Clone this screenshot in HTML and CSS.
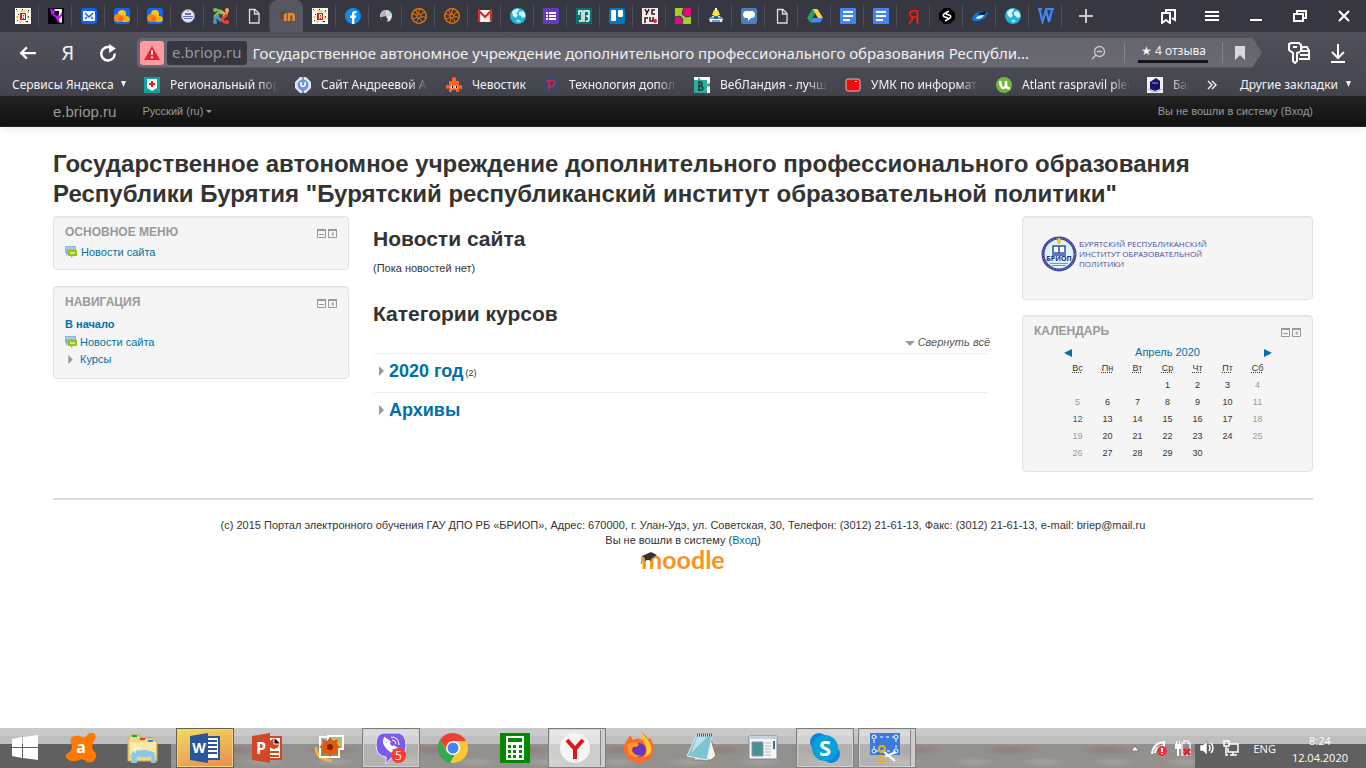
FILE: index.html
```
<!DOCTYPE html>
<html lang="ru">
  <head>
    <meta charset="UTF-8" />
    <meta name="viewport" content="width=device-width, initial-scale=1.0" />
    <title>e.briop.ru</title>
    <link rel="stylesheet" href="styles.css">
  </head>
  <body>
    <!-- shared icons -->
    <svg class="sprite" aria-hidden="true">
      <symbol id="i-ya-pic" viewBox="0 0 16 16"><path fill="#fff" d="M0 0h16v16H0z"/><path fill="#f5c518" d="M1 3l2-1 1 2zM5 1l3 2 3-2-1 3H6zM15 3l-3 0 1 3zM1 8l3 0-2 3zM15 9l-3-1 1 4zM4 13l3 0-2 3zM9 13l4 0-1 2z"/><path fill="#222" d="M1 1h1v1H1zM7 1h1v1H7zM13 2h1v1h-1zM3 6h1v1H3zM13 8h1v1h-1zM2 12h1v1H2zM11 13h2v1h-2z"/><path fill="#d01818" d="M5 5h6v7H5z"/><path fill="none" stroke="#fff" d="M9.500 11V6.500h-2V9h2M8 9l-1 2"/></symbol>
      <symbol id="i-cloud" viewBox="0 0 16 16"><rect width="16" height="16" rx="3" fill="#1067f5"/><circle cx="8" cy="6" r="4" fill="#ffc61a"/><circle cx="4" cy="10" r="4" fill="#ff8a00"/><path fill="#ff6b13" d="M5 14a4 4 0 0 1 2-6q3 0 4 3l1 3z"/><path fill="#ffb300" d="M9 14q-1-5 3-6 4 0 4 4l-2 2z"/></symbol>
      <symbol id="i-doc" viewBox="0 0 16 16"><path fill="none" stroke="#dcdce0" stroke-width="1.300" d="M3.500 1.500h5.500l4 4v9.500H3.500zM8.500 2v4h4.500"/></symbol>
      <symbol id="i-wheel" viewBox="0 0 16 16"><g fill="none" stroke="#f57c00"><circle cx="8" cy="8" r="7.300" stroke-width="1.300"/><circle cx="8" cy="8" r="2"/><path d="M8 6q-1-3 1-5M10 7q1-3 4-3M10 9q3-1 5 1M8 10q3 2 3 4M7 10q0 3-2 5M6 9q-2 2-5 2M6 7Q3 7 1 5M7 6Q5 4 5 2"/></g></symbol>
      <symbol id="i-globe" viewBox="0 0 16 16"><circle cx="8" cy="8" r="8" fill="#21b3dc"/><path fill="#d9f6fc" d="M2 4q3-4 7-3l-1 3-2 1 2 2-2 3-3-2zM9 4l4-1q3 3 2 6l-3 1-1-2-2-1z"/><path fill="#93e3f5" d="M6 12q3-1 5 1l-3 2z"/></symbol>
      <symbol id="i-gdocs" viewBox="0 0 16 16"><rect width="16" height="16" rx="1" fill="#4285f4"/><path fill="#fff" d="M3 3h10v2H3zM3 7h10v2H3zM3 11h7v2H3z"/></symbol>
      <symbol id="i-forum" viewBox="0 0 12 12"><path fill="#8ab4e8" d="M0 0h11v7H4L1 10V7H0z"/><path fill="#a9ccf4" d="M1 1h9v2H1z"/><path fill="#98c020" d="M3 4h9v6H8l-2 2v-2H3z"/><path fill="#d3ee6a" d="M5 6h5v2H5z"/></symbol>
      <symbol id="i-min" viewBox="0 0 9 9"><path fill="none" stroke="#999" d="M.5.5h8v8h-8z"/><path fill="#999" d="M0 0h9v2H0zM2 5h5v1H2z"/></symbol>
      <symbol id="i-dock" viewBox="0 0 9 9"><path fill="none" stroke="#999" d="M.5.5h8v8h-8z"/><path fill="#999" d="M0 0h9v2H0zM3 5l3-2v1L5 5l1 1v1z"/></symbol>
      <symbol id="i-tri" viewBox="0 0 6 10"><path fill="#999" d="M0 0l5 5-5 5z"/></symbol>
      <symbol id="i-down" viewBox="0 0 7 7"><path fill="#f2f2f4" d="M1 0h5L3.500 6z"/></symbol>
    </svg>

    <header class="browser">
      <div class="tabbar">
        <div class="tabs">
          <button class="tab" aria-label="Вкладка"><svg><use href="#i-ya-pic"/></svg></button>
          <button class="tab" aria-label="Вкладка"><svg viewBox="0 0 16 16"><path d="M0 0h16v16H0z"/><path fill="#b620f0" d="M2 0l5 3-1 3 3 2 5-6v13l-4-1-3-5-3 2z"/><path fill="#eee" d="M6 1h8v3l-3 4V3H7zM11 11l3-3v6l-2 1z"/><path d="M1 4l7 6 1 6H0z"/></svg></button>
          <button class="tab" aria-label="Почта"><svg viewBox="0 0 16 16"><rect width="16" height="16" rx="3" fill="#0b63f6"/><rect x="2" y="3" width="12" height="10" rx="1" fill="#fff"/><path fill="none" stroke="#0b63f6" stroke-width="1.500" d="M4 5l4 4 4-4M4 11l2-2M12 11l-2-2"/></svg></button>
          <button class="tab" aria-label="Облако"><svg><use href="#i-cloud"/></svg></button>
          <button class="tab" aria-label="Облако"><svg><use href="#i-cloud"/></svg></button>
          <button class="tab" aria-label="Вкладка"><svg viewBox="0 0 16 16"><circle cx="8" cy="8" r="6.500" fill="#e6e8f4" stroke="#8a8fc4"/><path fill="#6a70b8" d="M5 5h6v2H5zM3 8h10v1H3zM4 10h8v1H4z"/><path fill="#d6c94a" d="M7 2h2v2H7z"/></svg></button>
          <button class="tab" aria-label="Joomla"><svg viewBox="0 0 16 16"><g fill="none" stroke-width="2.600"><path stroke="#7ac143" d="M2 11V8l6-6"/><path stroke="#7ac143" d="M2 2q3-1 5 2l2 2"/><path stroke="#f9a541" d="M14 2q1 3-2 5l-2 2M8 3l6 5"/><path stroke="#f44321" d="M14 14q-3 1-5-2L7 10M14 6L8 13"/><path stroke="#5091cd" d="M2 14q-1-3 2-5l2-2M8 13L3 8"/></g><circle cx="2" cy="2" r="2" fill="#7ac143"/><circle cx="14" cy="2" r="2" fill="#f9a541"/><circle cx="14" cy="14" r="2" fill="#f44321"/><circle cx="2" cy="14" r="2" fill="#5091cd"/></svg></button>
          <button class="tab" aria-label="Документ"><svg><use href="#i-doc"/></svg></button>
          <button class="tab active" aria-label="e.briop.ru"><svg viewBox="0 0 16 16"><path fill="none" stroke="#f28a2c" stroke-width="2.600" d="M6.300 13V5M10 13V5M10 8q0-2 2.300-2t2.300 2v5"/><path fill="#5b4a42" d="M0 5l5-2 3 1-4 3-2 4H1z"/></svg></button>
          <button class="tab" aria-label="Вкладка"><svg><use href="#i-ya-pic"/></svg></button>
          <button class="tab" aria-label="Facebook"><svg viewBox="0 0 16 16"><circle cx="8" cy="8" r="8" fill="#1089f2"/><path fill="#fff" d="M7 16v-6H5V7.500h2V6q0-3 3-3h1.500v2.200H10Q9.400 5.200 9.400 6v1.500h2l-.4 2.500H9.400v6z"/></svg></button>
          <button class="tab" aria-label="Вкладка"><svg viewBox="0 0 16 16"><circle cx="8" cy="8" r="6" fill="#e9e3ee"/><path fill="#c8a8d8" d="M8 8V2A6 6 0 0 0 2 8z"/><path fill="#3b3c45" d="M8 8l-6 1q1 5 6 6l2-3z"/><path fill="#b9dbc9" d="M8 8l2-6q4 2 4 6z"/></svg></button>
          <button class="tab" aria-label="Вкладка"><svg><use href="#i-wheel"/></svg></button>
          <button class="tab" aria-label="Вкладка"><svg><use href="#i-wheel"/></svg></button>
          <button class="tab" aria-label="Gmail"><svg viewBox="0 0 16 16"><path fill="#f2f2f2" d="M1 2h14v12H1z"/><path fill="none" stroke="#d93025" stroke-width="2.200" d="M2 14V3l6 6 6-6v11"/></svg></button>
          <button class="tab" aria-label="Вкладка"><svg><use href="#i-globe"/></svg></button>
          <button class="tab" aria-label="Формы"><svg viewBox="0 0 16 16"><rect width="16" height="16" rx="1" fill="#673ab7"/><path fill="#fff" d="M3 4h2v2H3zM6 4h7v2H6zM3 7h2v2H3zM6 7h7v2H6zM3 10h2v2H3zM6 10h7v2H6z"/></svg></button>
          <button class="tab" aria-label="Вкладка"><svg viewBox="0 0 16 16"><path fill="#0a7070" d="M0 0h16v16H0z"/><path fill="none" stroke="#fff" stroke-width="1.500" d="M3 13h3V3H3v4M8 14V3h5v5h-3q3 0 3 3t-3 2"/></svg></button>
          <button class="tab" aria-label="Trello"><svg viewBox="0 0 16 16"><rect width="16" height="16" rx="2" fill="#0079bf"/><rect x="2" y="2" width="5" height="11" rx="1" fill="#fff"/><rect x="9" y="2" width="5" height="7" rx="1" fill="#fff"/></svg></button>
          <button class="tab" aria-label="vc.ru"><svg viewBox="0 0 16 16"><path fill="#fbe9ea" d="M0 0h16v16H0z"/><path fill="none" stroke="#222" stroke-width="1.500" d="M3 1l2 4M7 1L4 7M13 2h-3v4h3M3 15v-5h3M8 9v4h3V9"/><circle cx="13" cy="13" r="2" fill="#e8192c"/></svg></button>
          <button class="tab" aria-label="Вкладка"><svg viewBox="0 0 16 16"><path fill="#a4cf2a" d="M0 0h16v16H0z"/><path fill="#e5097f" d="M8 0h8v8l-5 1-4-3zM0 9l5-1 3 3-1 5H0z"/><path fill="none" stroke="#333640" d="M9 0L7 6l4 3 5-1M0 9l5-1 3 3-1 5"/></svg></button>
          <button class="tab" aria-label="Вкладка"><svg viewBox="0 0 16 16"><path fill="#ffe13b" d="M6 2h4l2 5H4z"/><path fill="#fff" d="M7 0h2v3H7z"/><path fill="#e8edf2" d="M1 11q7-8 14 0l-1 3H2z"/><path fill="none" stroke="#3c8fb7" stroke-width="1.500" d="M2 10h12M4 13h8"/><path fill="#276b91" d="M6 8h4v3H6z"/></svg></button>
          <button class="tab" aria-label="Чат"><svg viewBox="0 0 16 16"><rect width="16" height="16" rx="2" fill="#4d7dba"/><path fill="#fff" d="M4 3h8q2 1 2 3.500T12 10h-2l-3 3v-3H4Q2 9 2 6.500T4 3z"/></svg></button>
          <button class="tab" aria-label="Документ"><svg><use href="#i-doc"/></svg></button>
          <button class="tab" aria-label="Диск"><svg viewBox="0 0 16 16"><path fill="#21a464" d="M5.500 1L8 5.500 3 14 0 10z"/><path fill="#ffcf48" d="M5.500 1h5L16 10h-5z"/><path fill="#4688f4" d="M5.500 10H16l-3 4.500H3z"/></svg></button>
          <button class="tab" aria-label="Документы"><svg><use href="#i-gdocs"/></svg></button>
          <button class="tab" aria-label="Документы"><svg><use href="#i-gdocs"/></svg></button>
          <button class="tab tab-ya">Я</button>
          <button class="tab" aria-label="Вкладка"><svg viewBox="0 0 16 16"><path d="M5 0h6l5 5v6l-5 5H5l-5-5V5z"/><path fill="none" stroke="#fff" stroke-width="1.600" d="M10 3L5 6q-2 2 1 3l3 1M6 13l5-3q2-2-1-3L7 6"/></svg></button>
          <button class="tab" aria-label="Вкладка"><svg viewBox="0 0 16 16"><path fill="#087af0" d="M0 11Q2 4 10 3q8 0 5 4-3 6-11 6-4 0-4-2z"/><path fill="#0a1f4a" d="M7 5q5-3 8-1l-3 3H6z"/><path fill="#e9f5ff" d="M4 10q2-3 8-3-2 4-7 4z"/></svg></button>
          <button class="tab" aria-label="Вкладка"><svg><use href="#i-globe"/></svg></button>
          <button class="tab" aria-label="Вкладка"><svg viewBox="0 0 16 16"><path fill="none" stroke="#4285f4" stroke-width="2.200" d="M0 1h4M1.500 1l3 13L8 2l3 12 3-12M9 1h7"/></svg></button>
        </div>
        <button class="new-tab" aria-label="Новая вкладка"><svg viewBox="0 0 14 14"><path stroke="#c9c9cf" stroke-width="2" d="M7 0v14M0 7h14"/></svg></button>
        <div class="window-buttons">
          <button aria-label="Закладки"><svg viewBox="0 0 16 16"><path fill="none" stroke="#fff" stroke-width="2" d="M6 4V2h9v10l-3-2M2 5h8v10l-4-3-4 3z"/></svg></button>
          <button aria-label="Меню"><svg viewBox="0 0 16 16"><path fill="#fff" d="M1 3h14v2H1zM1 7h14v2H1zM1 11h14v2H1z"/></svg></button>
          <button aria-label="Свернуть"><svg viewBox="0 0 16 16"><path stroke="#fff" stroke-width="2" d="M2 12h12"/></svg></button>
          <button aria-label="Окно"><svg viewBox="0 0 16 16"><path fill="none" stroke="#fff" stroke-width="2" d="M2 6h9v7H2zM5 6V3h9v7h-3"/></svg></button>
          <button aria-label="Закрыть"><svg viewBox="0 0 16 16"><path stroke="#fff" stroke-width="2" d="M3 3l10 10M13 3L3 13"/></svg></button>
        </div>
      </div>

      <div class="toolbar">
        <button class="nav" aria-label="Назад"><svg viewBox="0 0 16 16"><path fill="none" stroke="#fff" stroke-width="2" d="M15 8H1M7 3L2 8l5 5"/></svg></button>
        <button class="nav yandex">Я</button>
        <button class="nav" aria-label="Обновить"><svg viewBox="0 0 16 16"><path fill="none" stroke="#fff" stroke-width="2.200" d="M14 8.500A6 6 0 1 1 10 3"/><path fill="#fff" d="M9 0l6 4-6 4z"/></svg></button>
        <div class="address">
          <button class="warning" aria-label="Небезопасно"><svg viewBox="0 0 18 16"><path fill="#df2531" d="M9 0l9 16H0z"/><path stroke="#fff" stroke-width="2" d="M9 5v5M9 12v2"/></svg></button>
          <button class="domain">e.briop.ru</button>
          <input class="page-title" type="text" aria-label="Адрес" value="Государственное автономное учреждение дополнительного профессионального образования Республи...">
          <button class="lens" aria-label="Масштаб"><svg viewBox="0 0 16 16"><circle cx="9.500" cy="6.500" r="5" fill="none" stroke="#c9c9ce" stroke-width="1.300"/><path stroke="#c9c9ce" stroke-width="1.400" d="M7 6.500h5M6 10l-4 4"/></svg></button>
          <button class="reviews">★ 4 отзыва</button>
          <button class="mark" aria-label="В закладки"><svg viewBox="0 0 10 14"><path fill="#d8d8dc" d="M0 0h10v14L5 9l-5 5z"/></svg></button>
        </div>
        <button class="tool" aria-label="Пароли"><svg viewBox="0 0 22 22"><g fill="none" stroke="#fff" stroke-width="2"><path d="M12 10L9 11v8l-2 2-2-2v-8L1 8V2l2-1h8l2 2v6"/><path d="M12 9h9v8H11M13 9l1-4h5l2 4M12 13h9"/></g><path fill="#fff" d="M5 4h4v2H5z"/></svg></button>
        <button class="tool download" aria-label="Загрузки"><svg viewBox="0 0 16 20"><path fill="none" stroke="#fff" stroke-width="2" d="M8 1v14M2 9l6 6 6-6M1 19h14"/></svg></button>
      </div>

      <nav class="bookmarks">
        <button class="services">Сервисы Яндекса <svg><use href="#i-down"/></svg></button>
        <a class="bookmark" href="#"><svg viewBox="0 0 16 16"><path fill="#12a29a" d="M0 0h16v16H0z"/><path fill="#f6f6f6" d="M3 2h10v9l-5 3-5-3z"/><path fill="#e2202c" d="M7 4h2v2h2v2H9v2H7V8H5V6h2z"/></svg><span class="fade">Региональный пор</span></a>
        <a class="bookmark" href="#"><svg viewBox="0 0 16 16"><path fill="#dfe5f2" d="M5 0h6l5 5v6l-5 5H5l-5-5V5z"/><circle cx="8" cy="8" r="5.500" fill="#6f93dc"/><path fill="none" stroke="#fff" stroke-width="1.500" d="M6 5v3q2 3 4 0V5"/><path stroke="#6f93dc" stroke-width="2" d="M8 0v3M8 13v3"/></svg><span class="fade">Сайт Андреевой А</span></a>
        <a class="bookmark short" href="#"><svg viewBox="0 0 16 16"><path fill="#ff6418" d="M6 1q2-2 4 0v3h3v5q1-2 3 0v3q-2 1-3-1v4h-3v-2H6v2H3v-4q-2 2-3 0V8q2-1 3 1V4h3z"/><circle cx="6" cy="10" r="1.600" fill="#fff"/><circle cx="10" cy="10" r="1.600" fill="#fff"/><path d="M6 9h1v2H6zM10 9h1v2h-1z"/></svg><span>Чевостик</span></a>
        <a class="bookmark" href="#"><svg viewBox="0 0 16 16"><circle cx="8" cy="8" r="7" fill="none" stroke="#2d4f86" stroke-width="1.500"/><path fill="none" stroke="#c22f62" stroke-width="1.500" d="M6 13V4q6-2 6 2t-6 3M3 4h4"/></svg><span class="fade">Технология допол</span></a>
        <a class="bookmark" href="#"><svg viewBox="0 0 16 16"><path fill="#fff" d="M0 0h16v16H0z"/><path fill="#35a99b" d="M0 3h4V0l3 3h6v4l3-1v4l-3-1v7H0z"/><path fill="none" stroke="#173f3d" stroke-width="1.500" d="M5 5v8M4 5h3q3 2-1 4 5 1 2 4H4"/></svg><span class="fade">ВебЛандия - лучш</span></a>
        <a class="bookmark" href="#"><svg viewBox="0 0 16 16"><rect x="1" y="2" width="14" height="12" rx="2" fill="#f80808" stroke="#d6c1c4"/><path fill="#fff" d="M10 4h2v1h-2z"/></svg><span class="fade">УМК по информат</span></a>
        <a class="bookmark" href="#"><svg viewBox="0 0 16 16"><circle cx="8" cy="8" r="8" fill="#70b83c"/><path fill="none" stroke="#fff" stroke-width="2.500" d="M4 4l1 5q2 4 5 0V4M10 8q1 4 4 3"/></svg><span class="fade">Atlant raspravil plec</span></a>
        <a class="bookmark last" href="#"><svg viewBox="0 0 16 16"><path fill="#f3f3f7" d="M0 0h16v16H0z"/><path fill="#15156e" d="M3 5l6-4 4 3v8l-5 2-5-2z"/><path fill="none" stroke="#9a9cc8" d="M5 6h6M1 12q7 5 14 0"/></svg><span class="fade">Бар</span></a>
        <button class="more" aria-label="Ещё"><svg viewBox="0 0 10 10"><path fill="none" stroke="#f2f2f4" stroke-width="1.400" d="M1 1l4 4-4 4M5 1l4 4-4 4"/></svg></button>
        <button class="other">Другие закладки <svg><use href="#i-down"/></svg></button>
      </nav>
    </header>

    <div class="navbar">
      <a class="brand" href="#">e.briop.ru</a>
      <button class="lang">Русский (ru)<span class="caret"></span></button>
      <span class="login">Вы не вошли в систему (<a href="#">Вход</a>)</span>
    </div>

    <div class="page">
      <h1>Государственное автономное учреждение дополнительного профессионального образования Республики Бурятия "Бурятский республиканский институт образовательной политики"</h1>

      <div class="columns">
        <aside>
          <section class="block">
            <div class="block-head">
              <h2>Основное меню</h2>
              <button aria-label="Скрыть блок"><svg><use href="#i-min"/></svg></button>
              <button aria-label="Переместить блок"><svg><use href="#i-dock"/></svg></button>
            </div>
            <ul>
              <li><svg><use href="#i-forum"/></svg><a href="#">Новости сайта</a></li>
            </ul>
          </section>
          <section class="block navigation">
            <div class="block-head">
              <h2>Навигация</h2>
              <button aria-label="Скрыть блок"><svg><use href="#i-min"/></svg></button>
              <button aria-label="Переместить блок"><svg><use href="#i-dock"/></svg></button>
            </div>
            <ul>
              <li><a href="#"><b>В начало</b></a></li>
              <li><svg><use href="#i-forum"/></svg><a href="#">Новости сайта</a></li>
              <li><svg class="arrow"><use href="#i-tri"/></svg><a href="#">Курсы</a></li>
            </ul>
          </section>
        </aside>

        <main>
          <h2>Новости сайта</h2>
          <p>(Пока новостей нет)</p>
          <h2>Категории курсов</h2>
          <div class="collapse"><button><span class="caret"></span>Свернуть всё</button></div>
          <div class="category"><svg><use href="#i-tri"/></svg><h3><a href="#">2020 год</a></h3><span>(2)</span></div>
          <div class="category"><svg><use href="#i-tri"/></svg><h3><a href="#">Архивы</a></h3></div>
        </main>

        <aside>
          <section class="block institute">
            <svg viewBox="0 0 36 36"><circle cx="18" cy="18" r="16" fill="#dff1fb" stroke="#3d449c" stroke-width="3"/><circle cx="18" cy="18" r="16" fill="none" stroke="#9fa8dc" stroke-dasharray="1 2"/><path fill="#f4c81e" d="M16 5l1-3h2l1 3-1 3h-2z"/><path fill="#fff" stroke="#34509d" stroke-width="1.500" d="M12 10h6v7h-6zM18 10h6v7h-6zM11 19h14"/><text x="18" y="25" text-anchor="middle" class="seal">БРИОП</text><path stroke="#8290b0" d="M9 27.500h18M11 29.500h14"/></svg>
            <p>БУРЯТСКИЙ РЕСПУБЛИКАНСКИЙ<br>ИНСТИТУТ ОБРАЗОВАТЕЛЬНОЙ<br>ПОЛИТИКИ</p>
          </section>
          <section class="block calendar">
            <div class="block-head">
              <h2>Календарь</h2>
              <button aria-label="Скрыть блок"><svg><use href="#i-min"/></svg></button>
              <button aria-label="Переместить блок"><svg><use href="#i-dock"/></svg></button>
            </div>
            <div class="month">
              <a href="#" aria-label="Март"><svg viewBox="0 0 8 8"><path fill="#0070a8" d="M8 0v8L0 4z"/></svg></a>
              <a href="#">Апрель 2020</a>
              <a href="#" aria-label="Май"><svg viewBox="0 0 8 8"><path fill="#0070a8" d="M0 0v8l8-4z"/></svg></a>
            </div>
            <table>
              <tr><th><abbr title="Воскресенье">Вс</abbr></th><th><abbr title="Понедельник">Пн</abbr></th><th><abbr title="Вторник">Вт</abbr></th><th><abbr title="Среда">Ср</abbr></th><th><abbr title="Четверг">Чт</abbr></th><th><abbr title="Пятница">Пт</abbr></th><th><abbr title="Суббота">Сб</abbr></th></tr>
              <tr><td></td><td></td><td></td><td>1</td><td>2</td><td>3</td><td>4</td></tr>
              <tr><td>5</td><td>6</td><td>7</td><td>8</td><td>9</td><td>10</td><td>11</td></tr>
              <tr><td class="today">12</td><td>13</td><td>14</td><td>15</td><td>16</td><td>17</td><td>18</td></tr>
              <tr><td>19</td><td>20</td><td>21</td><td>22</td><td>23</td><td>24</td><td>25</td></tr>
              <tr><td>26</td><td>27</td><td>28</td><td>29</td><td>30</td><td></td><td></td></tr>
            </table>
          </section>
        </aside>
      </div>

      <footer>
        <p>(c) 2015 Портал электронного обучения ГАУ ДПО РБ «БРИОП», Адрес: 670000, г. Улан-Удэ, ул. Советская, 30, Телефон: (3012) 21-61-13, Факс: (3012) 21-61-13, e-mail: briep@mail.ru</p>
        <p>Вы не вошли в систему (<a href="#">Вход</a>)</p>
        <a class="moodle" href="#">moodle<svg viewBox="0 0 18 16"><path fill="#333" d="M2 5l9-4 6 3-6 4v2q-3-2-6 0V7z"/><path fill="none" stroke="#777" d="M2 5v5l-1 3"/></svg></a>
      </footer>
    </div>

    <div class="taskbar">
      <button class="start" aria-label="Пуск"><svg viewBox="0 0 28 28"><path fill="#fff" d="M1 5l10-2v10H1zM12 3l15-2v12H12zM1 14h10v10L1 22zM12 14h15v12l-15-2z"/></svg></button>
      <button class="task" aria-label="Avast"><svg viewBox="0 0 32 32"><path fill="#ff7800" d="M7 5q6-3 10 0 4 1 5-2 4-4 8-1 2 4-1 7-3 4-1 9 5 4 2 9-2 5-8 3-4-4-8-2-7 3-12-1-3-4 1-6 4-2 4-7-3-5 0-9z"/><text x="16" y="21" text-anchor="middle" class="avast">a</text></svg></button>
      <button class="task" aria-label="Проводник"><svg viewBox="0 0 32 32"><path fill="#f0d77d" stroke="#c9a955" d="M4 3h8l2 3h11l5 3v20H1V8z"/><path fill="#0ca94c" d="M5 3h5v2H5z"/><path fill="#dd3e2b" d="M13 6h5v2h-5z"/><path fill="#2b8be0" d="M21 8h5v2h-5z"/><path fill="#fae9a4" d="M3 10h26v12H3z"/><path fill="#8fc5e6" d="M5 20q11-4 22 0l2 11h-5v-6H10v6H4z"/><path stroke="#fff" d="M4 16h9M8 12v9"/></svg></button>
      <button class="task open word" aria-label="Word"><svg viewBox="0 0 32 32"><path fill="#fff" stroke="#2b579a" stroke-width="2" d="M16 5h14v22H16z"/><path stroke="#2b579a" stroke-width="2" d="M19 9h9M19 13h9M19 17h9M19 21h9"/><path fill="#2b579a" d="M1 4l18-3v30L1 28z"/><text x="10" y="21" text-anchor="middle" class="office">W</text></svg></button>
      <button class="task" aria-label="PowerPoint"><svg viewBox="0 0 32 32"><path fill="#fff" stroke="#d24726" stroke-width="2" d="M16 5h14v22H16z"/><circle cx="23" cy="12" r="5" fill="#d24726"/><path stroke="#fff" d="M23 6v6h6"/><path stroke="#d24726" stroke-width="2" d="M18 20h10M18 24h10"/><path fill="#d24726" d="M1 4l18-3v30L1 28z"/><text x="10" y="22" text-anchor="middle" class="powerpoint">P</text></svg></button>
      <button class="task" aria-label="Фото"><svg viewBox="0 0 32 32"><path fill="none" stroke="#f2b43c" stroke-width="3" d="M3 15q0 12 16 14"/><path fill="#8fb8d4" stroke="#fff" stroke-width="2" d="M7 5h12v11H7z"/><path fill="#a8c46c" stroke="#fff" stroke-width="2" d="M15 4h15v13H15z"/><path fill="#7d9b52" stroke="#fff" stroke-width="2" d="M7 14h19v11H7z"/><path fill="#e8580c" d="M17 5l3 4 5-2-1 5 4 3-4 2 1 5-5-1-3 4-3-4-5 1 1-5-4-2 4-3-1-5 5 2z"/><circle cx="17" cy="15" r="3" fill="#7b2606"/></svg></button>
      <button class="task open" aria-label="Viber"><svg viewBox="0 0 32 32"><path fill="#7d5ce8" stroke="#f1ecff" d="M8 1h16q7 2 7 12t-7 12h-7l-6 7v-7Q1 24 1 13T8 1z"/><path fill="none" stroke="#fff" stroke-width="3" d="M10 7q-2 3 2 8t9 5l2-2-4-3-2 1-4-4 1-2z"/><path fill="none" stroke="#fff" d="M16 5q8 0 8 8M17 8q4 0 4 4"/></svg><span class="count">5</span></button>
      <button class="task" aria-label="Chrome"><svg viewBox="0 0 32 32"><circle cx="16" cy="16" r="15" fill="#fcc934"/><path fill="#ea4335" d="M3 8a15 15 0 0 1 26 1H16l-6 10z"/><path fill="#34a853" d="M3 8l7 12q3 3 8 2l-5 9A15 15 0 0 1 3 8z"/><circle cx="16" cy="16" r="7" fill="#fff"/><circle cx="16" cy="16" r="5.500" fill="#4285f4"/></svg></button>
      <button class="task" aria-label="Калькулятор"><svg viewBox="0 0 32 32"><path fill="#008a00" d="M1 1h30v30H1z"/><path fill="#fff" d="M7 4h18v24H7z"/><path fill="#008a00" d="M9 6h14v4H9zM9 13h3v3H9zM14 13h3v3h-3zM20 13h3v3h-3zM9 18h3v3H9zM14 18h3v3h-3zM20 18h3v3h-3zM9 23h3v3H9zM14 23h3v3h-3zM20 23h3v3h-3z"/></svg></button>
      <button class="task open stack bright" aria-label="Яндекс.Браузер"><svg viewBox="0 0 32 32"><circle cx="16" cy="16" r="15" fill="#f5f5f5"/><path fill="none" stroke="#e01515" stroke-width="4" d="M8 8l8 9 8-9M16 16v11"/></svg></button>
      <button class="task" aria-label="Firefox"><svg viewBox="0 0 32 32"><path fill="#ff6a2a" d="M5 7l2-4 3 5q5-3 9 0V0q3 3 6 7l2-1q5 7 3 14-3 11-14 11T1 19q-1-7 4-12z"/><path fill="#ffcb2f" d="M19 0q1 3 5 7 6 7 4 13-3 5-7 5 5-6 1-13-4-4-3-12z"/><circle cx="16" cy="18" r="7" fill="#6b35bd"/><path fill="#ff9a26" d="M4 13q6-5 12-1l-2 3q-5-1-5 3 1 6 9 5-7 5-12-1z"/></svg></button>
      <button class="task" aria-label="Блокнот"><svg viewBox="0 0 32 32"><path fill="#f5f1e4" stroke="#8d7b55" d="M25 4l6 20-5 4H8l4-4z"/><path fill="#80c4d4" stroke="#d7eef2" d="M11 4h16l-5 24-20-4z"/><path fill="#bbe2e8" d="M12 5h10L6 21z"/><path stroke="#555" stroke-dasharray="1 1" stroke-width="3" d="M12 3h15"/></svg></button>
      <button class="task" aria-label="Приложение"><svg viewBox="0 0 32 32"><path fill="#f7f7f7" stroke="#7c8a97" d="M2 4h28v23H2z"/><path fill="#c5d2de" d="M2 4h28v3H2z"/><path fill="#4b8f91" stroke="#8395a3" d="M5 10h11v14H5z"/><path stroke="#aab2b8" d="M18 11h6M18 14h6M18 17h6M18 20h6M18 23h6"/><path fill="#376caa" d="M26 9h2v8h-2z"/></svg></button>
      <button class="task open" aria-label="Skype"><svg viewBox="0 0 32 32"><circle cx="10" cy="10" r="9" fill="#0b86d8"/><circle cx="22" cy="22" r="9" fill="#0b86d8"/><circle cx="16" cy="16" r="13" fill="#079fdc"/><text x="16" y="24" text-anchor="middle" class="skype">S</text></svg></button>
      <button class="task open stack" aria-label="Ножницы"><svg viewBox="0 0 32 32"><path fill="#3d7bd8" d="M1 1h30v22H1z"/><path fill="none" stroke="#fff" stroke-dasharray="3 3" d="M5 5h22v14H5z"/><g fill="#3d7bd8" stroke="#fff"><circle cx="5" cy="5" r="2"/><circle cx="27" cy="5" r="2"/><circle cx="5" cy="19" r="2"/><circle cx="27" cy="19" r="2"/></g><path stroke="#fff" stroke-width="2" d="M14 19l12 10M15 25l12-5"/><g fill="none" stroke="#e8b322" stroke-width="2"><circle cx="13" cy="17" r="3"/><circle cx="13" cy="27" r="3"/></g></svg></button>
      <div class="tray">
        <button aria-label="Показать значки"><svg viewBox="0 0 16 16"><path fill="#fff" stroke="#777" d="M4 11h8L8 6z"/></svg></button>
        <button aria-label="Avast"><svg viewBox="0 0 16 16"><path fill="none" stroke="#fff" stroke-width="2" d="M1 14Q2 3 13 2M4 13q0-6 9-7M13 1v6"/><circle cx="11" cy="11" r="5" fill="#ef3038"/><path stroke="#fff" stroke-width="2" d="M11 8v4M11 13v1"/></svg></button>
        <button aria-label="Питание"><svg viewBox="0 0 16 16"><path fill="#fff" d="M0 4h6v5H4v7H2V9H0zM1 1h1v3H1zM4 1h1v3H4z"/><path fill="none" stroke="#eee" stroke-width="1.500" d="M7 15V3h2V1h4v2h2v12z"/><path stroke="#e32028" stroke-width="2.500" d="M9 9l6 6M15 9l-6 6"/></svg></button>
        <button aria-label="Громкость"><svg viewBox="0 0 16 16"><path fill="#fff" stroke="#555" stroke-width=".5" d="M1 5h3l4-4v14l-4-4H1z"/><path fill="none" stroke="#fff" stroke-width="1.500" d="M10 5q2 3 0 6M12 3q4 5 0 10"/></svg></button>
        <button aria-label="Сеть"><svg viewBox="0 0 16 16"><path fill="none" stroke="#fff" stroke-width="1.500" d="M6 4h9v8H5V8M7 15h7M10 12v3M1 1h5v5H1zM3 6v9h2"/></svg></button>
        <button class="keyboard">ENG</button>
        <div class="clock"><span>8:24</span><span>12.04.2020</span></div>
      </div>
    </div>
  </body>
</html>
```
FILE: styles.css
```
* {
  box-sizing: border-box;
}

body {
  margin: 0;
  min-height: 100vh;
  display: flex;
  flex-direction: column;
  background: #fff;
  color: #333;
  font: 11px/15px "Liberation Sans", Arial, sans-serif;
}

h1, h2, h3, p, ul {
  margin: 0;
  padding: 0;
}

button {
  margin: 0;
  padding: 0;
  border: 0;
  background: none;
  color: inherit;
  font: inherit;
}

a {
  color: #0070a8;
  text-decoration: none;
}

svg {
  display: block;
  flex: none;
}

.sprite {
  display: none;
}

/* browser window */
.browser {
  color: #f2f2f4;
  font-family: "Noto Sans", "Open Sans", sans-serif;
  background: linear-gradient(#565760, #43444d);
}

.tabbar {
  display: flex;
  align-items: center;
  height: 32px;
  padding-left: 6px;
  background: #363740;
}

.tabs {
  display: flex;
}

.tab {
  display: flex;
  align-items: center;
  justify-content: center;
  width: 33px;
  height: 32px;
  background: linear-gradient(#4c4d57, #4c4d57) right center / 1px 24px no-repeat;
}

.tab svg {
  width: 16px;
  height: 16px;
}

.tab.active {
  border-radius: 7px 7px 0 0;
  background: #565760;
}

.tab-ya {
  color: #f21b0c;
  font-size: 20px;
}

.new-tab {
  padding: 0 17px;
}

.new-tab svg {
  width: 14px;
  height: 14px;
}

.window-buttons {
  display: flex;
  gap: 28px;
  margin-left: auto;
  padding-right: 14px;
}

.window-buttons svg {
  width: 16px;
  height: 16px;
}

.toolbar {
  display: flex;
  align-items: center;
  height: 41px;
  padding: 0 20px 0 19px;
}

.nav {
  width: 18px;
  margin-right: 22px;
  font-size: 20px;
  line-height: 24px;
}

.nav svg {
  width: 18px;
  height: 18px;
}

.address {
  display: flex;
  flex: 1;
  align-items: center;
  height: 30px;
  margin: 0 26px 0 -2px;
  padding: 0 17px 0 3px;
  border-radius: 5px;
  background: linear-gradient(#64656e, #696a72);
  clip-path: polygon(0 0, calc(100% - 10px) 0, 100% 50%, calc(100% - 10px) 100%, 0 100%);
}

.warning {
  width: 24px;
  height: 24px;
  padding: 0 4px;
  border-radius: 3px;
  background: #ff9ba0;
}

.warning svg {
  width: 16px;
  height: 16px;
}

.domain {
  height: 24px;
  margin-left: 3px;
  padding: 0 5px;
  border-radius: 3px;
  background: #363740;
  color: #95969e;
  font-size: 15px;
}

.page-title {
  flex: 1;
  min-width: 0;
  padding: 0 6px;
  border: 0;
  background: none;
  color: #f0f0f2;
  font: 15px "Noto Sans", sans-serif;
}

.lens {
  padding-right: 18px;
}

.lens svg {
  width: 16px;
  height: 16px;
}

.reviews {
  height: 20px;
  padding: 0 16px 4px;
  border: solid #85868e;
  border-width: 0 1px;
  font-size: 12px;
  line-height: 14px;
  background: linear-gradient(#16161a, #16161a) center bottom / 70px 3px no-repeat;
}

.mark {
  padding-left: 12px;
}

.mark svg {
  width: 10px;
  height: 14px;
}

.tool svg {
  width: 22px;
  height: 22px;
}

.download {
  margin-left: 20px;
}

.download svg {
  width: 16px;
  height: 20px;
}

.bookmarks {
  display: flex;
  align-items: center;
  gap: 17px;
  height: 23px;
  padding: 0 14px 0 12px;
  font-size: 12px;
}

.services, .other {
  display: flex;
  align-items: center;
  justify-content: space-between;
  width: 115px;
  white-space: nowrap;
}

.services svg, .other svg {
  width: 7px;
  height: 7px;
}

.other {
  margin-left: auto;
  width: 112px;
}

.more svg {
  width: 10px;
  height: 10px;
}

.bookmark {
  display: flex;
  align-items: center;
  gap: 10px;
  width: 134px;
  color: inherit;
  white-space: nowrap;
}

.bookmark svg {
  width: 16px;
  height: 16px;
}

.short {
  width: 80px;
}

.last {
  width: 43px;
}

.fade {
  flex: 1;
  overflow: hidden;
  -webkit-mask: linear-gradient(to left, transparent, #000 20px);
  mask: linear-gradient(to left, transparent, #000 20px);
}

/* site */
.navbar {
  display: flex;
  align-items: center;
  height: 31px;
  padding: 0 53px;
  background: linear-gradient(#222, #111);
  border-bottom: 1px solid #252525;
  box-shadow: 0 1px 8px rgba(0, 0, 0, 0.1);
  color: #999;
}

.navbar a {
  color: #999;
}

.navbar .brand {
  font-size: 15px;
}

.lang {
  display: flex;
  align-items: center;
  gap: 3px;
  margin-left: 26px;
}

.caret {
  display: inline-block;
  border: 3px solid transparent;
  border-top-color: #999;
  border-bottom: 0;
}

.login {
  margin-left: auto;
}

.page {
  flex: 1;
  padding: 22px 53px 0;
}

h1 {
  margin-bottom: 7px;
  font-size: 24px;
  line-height: 30px;
}

.columns {
  display: grid;
  grid-template-columns: 296fr 625fr 291fr;
  column-gap: 24px;
  align-items: start;
}

.block {
  margin-bottom: 16px;
  padding: 5px 11px 7px;
  border: 1px solid #e3e3e3;
  border-radius: 4px;
  background: #f5f5f5;
  box-shadow: inset 0 1px 1px rgba(0, 0, 0, 0.05);
}

.block-head {
  display: flex;
  align-items: center;
  gap: 2px;
}

.block-head h2 {
  flex: 1;
  color: #999;
  font-size: 12px;
  line-height: 20px;
  text-transform: uppercase;
}

.block-head button {
  padding-top: 3px;
}

.block-head svg {
  width: 9px;
  height: 9px;
}

.block ul {
  list-style: none;
}

.block li {
  display: flex;
  align-items: center;
  gap: 4px;
  height: 20px;
}

.block li svg {
  width: 12px;
  height: 12px;
}

.block li .arrow {
  height: 9px;
}

.navigation {
  padding-bottom: 10px;
}

.navigation ul {
  padding-top: 3px;
}

.navigation li {
  gap: 3px;
  height: 18px;
}

.navigation li:last-child {
  height: 17px;
}

main {
  padding-right: 8px;
}

main h2 {
  padding-top: 8px;
  font-size: 21px;
  line-height: 30px;
}

main p {
  padding: 7px 0 15px;
}

.collapse {
  padding: 6px 0 3px;
  text-align: right;
  color: #555;
  font-style: italic;
}

.collapse .caret {
  margin-right: 3px;
  border-width: 5px 5px 0;
}

.category {
  display: flex;
  align-items: center;
  height: 39px;
  padding: 0 6px 5px;
  border-top: 1px solid #eee;
  border-radius: 4px;
}

.category svg {
  width: 6px;
  height: 10px;
  margin-right: 4px;
}

.category h3 {
  font-size: 18px;
  line-height: 20px;
}

.category span {
  padding: 5px 0 0 2px;
  font-size: 9px;
}

.institute {
  display: flex;
  align-items: center;
  gap: 2px;
  height: 84px;
  margin-bottom: 15px;
  padding: 0 17px 8px 18px;
  color: #4a4a9c;
  font: 8px/10px "Open Sans", sans-serif;
}

.institute svg {
  width: 36px;
  height: 36px;
}

.seal {
  fill: #232d80;
  font: bold 7px "Open Sans", sans-serif;
}

.calendar {
  padding-bottom: 9px;
}

.month {
  display: flex;
  align-items: center;
  justify-content: space-between;
  width: 208px;
  margin: 4px auto 0;
}

.month svg {
  width: 8px;
  height: 8px;
}

.calendar table {
  margin: 0 auto;
  border-collapse: collapse;
  table-layout: fixed;
  width: 210px;
  font-size: 9px;
  line-height: 17px;
  text-align: center;
}

.calendar th, .calendar td {
  height: 17px;
  padding: 0;
}

.calendar th {
  font-weight: normal;
}

.calendar td:first-child, .calendar td:last-child {
  color: #999;
}

.calendar td.today {
  color: #0070a8;
}

footer {
  margin-top: 10px;
  padding-top: 18px;
  border-top: 2px solid #ddd;
  text-align: center;
}

.moodle {
  display: inline-block;
  position: relative;
  color: #f7931e;
  font: bold 25px/22px Lato, sans-serif;
}

.moodle svg {
  position: absolute;
  top: 3px;
  left: -1px;
  width: 18px;
  height: 16px;
}

/* taskbar */
.taskbar {
  display: flex;
  gap: 4px;
  height: 40px;
  background:
    linear-gradient(#c9c9ca 8px, #bebebf 8px 16px, transparent 16px),
    linear-gradient(90deg, #606060 171px, transparent 171px calc(100% - 171px), #606060 calc(100% - 171px)),
    radial-gradient(ellipse 32px 6px at 40px 22px, #8c7f7c, transparent) 0 0 / 97px 40px,
    radial-gradient(ellipse 24px 5px at 50px 34px, #a3a29e, transparent) 0 0 / 71px 40px,
    #93918e;
  color: #fff;
}

.start {
  width: 48px;
  padding-left: 11px;
}

.start svg {
  width: 28px;
  height: 28px;
}

.task {
  display: flex;
  align-items: center;
  justify-content: center;
  position: relative;
  width: 58px;
  height: 40px;
}

.task svg {
  width: 32px;
  height: 32px;
}

.open {
  border: 1px solid #7d7d7d;
  box-shadow: inset 0 0 0 1px #d2d2d2;
  background: rgba(255, 255, 255, 0.3);
}

.word {
  border-color: #69614c;
  background: linear-gradient(165deg, #f0dc61, #e88c4e);
  box-shadow: inset 0 0 0 1px #f5d28a;
}

.stack {
  padding-right: 4px;
  box-shadow: inset 0 0 0 1px #d2d2d2, inset -4px 0 #ccc, inset -5px 0 #888;
}

.bright {
  background: rgba(255, 255, 255, 0.55);
}

.count {
  position: absolute;
  right: 13px;
  bottom: 4px;
  width: 15px;
  border-radius: 8px;
  background: #fb3b30;
  font: 12px/15px "Open Sans", sans-serif;
}

.avast, .office, .powerpoint, .skype {
  fill: #fff;
  font: bold 16px "Open Sans", sans-serif;
}

.office {
  font-size: 14px;
}

.skype {
  font-size: 22px;
}

.tray {
  display: flex;
  align-items: center;
  gap: 8px;
  margin-left: auto;
  padding-right: 18px;
  font: 11px/17px "Open Sans", sans-serif;
}

.tray svg {
  width: 16px;
  height: 16px;
}

.keyboard {
  margin: 0 8px 0 6px;
}

.clock {
  display: flex;
  flex-direction: column;
  align-items: center;
  padding-top: 2px;
}
```
